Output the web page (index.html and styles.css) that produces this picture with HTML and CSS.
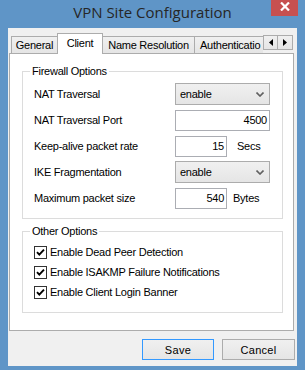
FILE: index.html
```html
<!DOCTYPE html>
<html lang="en">
<head>
  <meta charset="UTF-8" />
  <title>VPN Site Configuration</title>
  <link rel="stylesheet" href="styles.css">
</head>
<body>

  <div class="window">
    <!-- Title bar -->
    <div class="titlebar">
      <span class="title">VPN Site Configuration</span>
      <div class="close">
        <svg width="10" height="9" viewBox="0 0 10 9"><path d="M1 0.5 L9 8.5 M9 0.5 L1 8.5" stroke="#fff" stroke-width="2.2" fill="none"/></svg>
      </div>
    </div>

    <div class="client">
      <!-- Tabs -->
      <div class="tabbar">
        <div class="tabs">
          <div class="tab tab-general">General</div>
          <div class="tab tab-client active">Client</div>
          <div class="tab tab-names">Name Resolution</div>
          <div class="tab tab-auth">Authenticatio</div>
        </div>
        <div class="tab-scroll">
          <div class="scroll-btn"><svg width="4" height="7" viewBox="0 0 4 7"><path d="M4 0 L0 3.5 L4 7 Z" fill="#000"/></svg></div>
          <div class="scroll-btn"><svg width="4" height="7" viewBox="0 0 4 7"><path d="M0 0 L4 3.5 L0 7 Z" fill="#000"/></svg></div>
        </div>
      </div>

      <!-- Client page -->
      <div class="panel">
        <fieldset class="group firewall">
          <legend>Firewall Options</legend>
          <div class="row">
            <label>NAT Traversal</label>
            <div class="combo"><span>enable</span><svg width="8" height="5" viewBox="0 0 8 5"><path d="M0.5 0.5 L4 4 L7.5 0.5" stroke="#606060" stroke-width="1.6" fill="none"/></svg></div>
          </div>
          <div class="row">
            <label>NAT Traversal Port</label>
            <div class="textbox wide">4500</div>
          </div>
          <div class="row">
            <label>Keep-alive packet rate</label>
            <div class="textbox">15</div>
            <span class="unit secs">Secs</span>
          </div>
          <div class="row">
            <label>IKE Fragmentation</label>
            <div class="combo"><span>enable</span><svg width="8" height="5" viewBox="0 0 8 5"><path d="M0.5 0.5 L4 4 L7.5 0.5" stroke="#606060" stroke-width="1.6" fill="none"/></svg></div>
          </div>
          <div class="row">
            <label>Maximum packet size</label>
            <div class="textbox">540</div>
            <span class="unit">Bytes</span>
          </div>
        </fieldset>

        <fieldset class="group other">
          <legend>Other Options</legend>
          <div class="check-row">
            <span class="checkbox"><svg width="11" height="11" viewBox="0 0 11 11"><path d="M2 5.2 L4.3 7.6 L9 2.6" stroke="#000" stroke-width="1.9" fill="none"/></svg></span>
            Enable Dead Peer Detection
          </div>
          <div class="check-row">
            <span class="checkbox"><svg width="11" height="11" viewBox="0 0 11 11"><path d="M2 5.2 L4.3 7.6 L9 2.6" stroke="#000" stroke-width="1.9" fill="none"/></svg></span>
            Enable ISAKMP Failure Notifications
          </div>
          <div class="check-row">
            <span class="checkbox"><svg width="11" height="11" viewBox="0 0 11 11"><path d="M2 5.2 L4.3 7.6 L9 2.6" stroke="#000" stroke-width="1.9" fill="none"/></svg></span>
            Enable Client Login Banner
          </div>
        </fieldset>
      </div>

      <!-- Buttons -->
      <div class="buttons">
        <button class="btn btn-save">Save</button>
        <button class="btn btn-cancel">Cancel</button>
      </div>
    </div>
  </div>

</body>
</html>
```

FILE: styles.css
```css
* { margin: 0; padding: 0; box-sizing: border-box; }
body {
  font-family: "Liberation Sans", Arial, sans-serif;
  font-size: 11px;
  letter-spacing: -0.25px;
  color: #000;
  background-color: #5f95c7;
  width: 305px;
  height: 370px;
  overflow: hidden;
}

.window { width: 305px; }

/* Title bar */
.titlebar {
  position: relative;
  height: 28px;
  display: flex;
  justify-content: center;
  align-items: center;
  padding-bottom: 4px;
}
.title {
  font-family: "Open Sans", "Liberation Sans", sans-serif;
  font-size: 15px;
  letter-spacing: 0;
  color: #262626;
}
.close {
  position: absolute;
  top: 0;
  right: 7px;
  width: 27px;
  height: 16px;
  background-color: #c75050;
  display: flex;
  justify-content: center;
  align-items: center;
  padding-bottom: 3px;
}

/* Client area */
.client {
  margin: 0 8px;
  height: 338px;
  background-color: #f0f0f0;
  padding-top: 5px;
}

/* Tabs */
.tabbar {
  display: flex;
  margin: 0 4px -1px 3px;
  position: relative;
  z-index: 1;
}
.tabs {
  display: flex;
  align-items: flex-end;
  width: 252px;
  overflow: hidden;
}
.tab {
  flex: 0 0 auto;
  height: 18px;
  border: 1px solid #acacac;
  border-left: none;
  background: linear-gradient(#f0f0f0, #e5e5e5);
  display: flex;
  align-items: center;
  justify-content: center;
  padding-bottom: 1px;
  white-space: nowrap;
}
.tab-general { width: 47px; border-left: 1px solid #acacac; }
.tab-client { width: 45px; }
.tab-names { width: 92px; }
.tab-auth { width: 68px; justify-content: flex-start; padding-left: 5px; border-right: none; overflow: hidden; }
.tab.active {
  height: 21px;
  background: #fff;
  border-bottom: none;
  padding-bottom: 2px;
  margin-left: -1px;
  border-left: 1px solid #acacac;
  width: 46px;
}
.tab-scroll {
  display: flex;
  margin-top: 2px;
  align-self: flex-start;
}
.scroll-btn {
  width: 15px;
  height: 15px;
  border: 1px solid #acacac;
  background: linear-gradient(#f0f0f0, #e5e5e5);
  display: flex;
  justify-content: center;
  align-items: center;
}
.scroll-btn + .scroll-btn { border-left: none; }

/* Page */
.panel {
  margin: 0 3px 0 1px;
  height: 278px;
  border: 1px solid #acacac;
  background-color: #fff;
  padding: 10px 10px 0 12px;
}

.group {
  border: 1px solid #dcdcdc;
  min-width: 0;
  padding: 0 10px 9px 11px;
}
.group legend {
  line-height: 14px;
  padding: 0 2px;
  margin-left: -4px;
}
.firewall .row:first-of-type { margin-top: 5px; }
.other { margin-top: 5px; padding-bottom: 10px; }

.row {
  display: flex;
  align-items: center;
  height: 22px;
}
.row + .row { margin-top: 4px; }
.row label { flex: 0 0 141px; }

.combo {
  width: 95px;
  height: 22px;
  border: 1px solid #acacac;
  background: linear-gradient(#f0f0f0, #e5e5e5);
  display: flex;
  align-items: center;
  justify-content: space-between;
  padding: 0 5px 0 4px;
}
.textbox {
  width: 52px;
  height: 21px;
  border: 1px solid #abadb3;
  background: #fff;
  text-align: right;
  padding: 3px 2px 0 0;
}
.textbox.wide { width: 95px; }
.unit { margin-left: 6px; }
.unit.secs { margin-left: 10px; }

.check-row {
  display: flex;
  align-items: center;
  height: 20px;
}
.check-row:first-of-type { margin-top: 4px; }
.checkbox {
  width: 13px;
  height: 13px;
  border: 1px solid #333;
  background: #fff;
  margin-right: 3px;
  display: flex;
}

/* Buttons */
.buttons {
  display: flex;
  justify-content: flex-end;
  gap: 8px;
  margin-top: 8px;
  padding-right: 2px;
}
.btn {
  height: 21px;
  font-family: "Liberation Sans", Arial, sans-serif;
  font-size: 11px;
  letter-spacing: 0.3px;
  color: #000;
  border: 1px solid #acacac;
  background: linear-gradient(#f0f0f0, #e5e5e5);
}
.btn-save { width: 72px; border-color: #3399ff; }
.btn-cancel { width: 73px; }
```
